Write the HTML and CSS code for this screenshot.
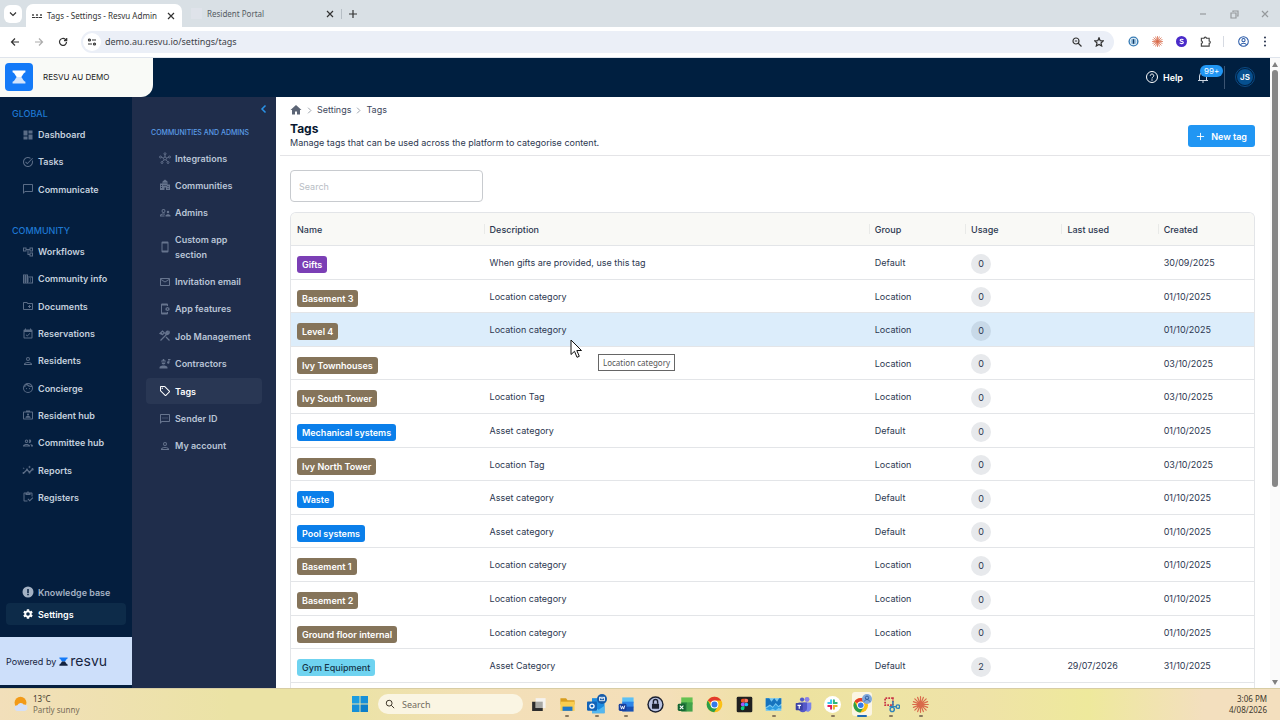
FILE: index.html
```html
<!DOCTYPE html>
<html lang="en">
<head>
    <meta charset="UTF-8">
    <meta name="viewport" content="width=device-width, initial-scale=1.0">
    <title>Tags - Settings - Resvu Admin</title>
    <link rel="stylesheet" href="styles.css">
</head>
<body>
    <!-- Icon set -->
    <svg class="sprite" aria-hidden="true">
        <symbol id="i-dashboard" viewBox="0 0 24 24"><path d="M3 13h8V3H3v10zm0 8h8v-6H3v6zm10 0h8V11h-8v10zm0-18v6h8V3h-8z"/></symbol>
        <symbol id="i-task" viewBox="0 0 24 24"><path d="M22 5.18 10.59 16.6l-4.24-4.24 1.41-1.41 2.83 2.83 10-10L22 5.18zM19.79 10.22c.13.57.21 1.17.21 1.78 0 4.42-3.58 8-8 8s-8-3.58-8-8 3.58-8 8-8c1.58 0 3.04.46 4.28 1.25l1.44-1.44A9.9 9.9 0 0 0 12 2C6.48 2 2 6.48 2 12s4.48 10 10 10 10-4.48 10-10c0-1.19-.22-2.33-.6-3.39l-1.61 1.61z"/></symbol>
        <symbol id="i-chat" viewBox="0 0 24 24"><path d="M20 2H4c-1.1 0-2 .9-2 2v18l4-4h14c1.1 0 2-.9 2-2V4c0-1.1-.9-2-2-2zm0 14H6l-2 2V4h16v12z"/></symbol>
        <symbol id="i-tree" viewBox="0 0 24 24"><path d="M22 11V3h-7v3H9V3H2v8h7V8h2v10h4v3h7v-8h-7v3h-2V8h2v3h7zM7 9H4V5h3v4zm10 6h3v4h-3v-4zm0-10h3v4h-3V5z"/></symbol>
        <symbol id="i-business" viewBox="0 0 24 24"><path d="M12 7V3H2v18h20V7H12zM6 19H4v-2h2v2zm0-4H4v-2h2v2zm0-4H4V9h2v2zm0-4H4V5h2v2zm4 12H8v-2h2v2zm0-4H8v-2h2v2zm0-4H8V9h2v2zm0-4H8V5h2v2zm10 12h-8v-2h2v-2h-2v-2h2v-2h-2V9h8v10zm-2-8h-2v2h2v-2zm0 4h-2v2h2v-2z"/></symbol>
        <symbol id="i-folder" viewBox="0 0 24 24"><path d="M20 6h-8l-2-2H4c-1.1 0-2 .9-2 2v12c0 1.1.9 2 2 2h16c1.1 0 2-.9 2-2V8c0-1.1-.9-2-2-2zm0 12H4V6h5.17l2 2H20v10zm-8-4h2v2h2v-2h2v-2h-2v-2h-2v2h-2v2z"/></symbol>
        <symbol id="i-event" viewBox="0 0 24 24"><path d="m16.53 11.06-1.06-1.06-4.88 4.88-2.12-2.12-1.06 1.06L10.59 17l5.94-5.94zM19 3h-1V1h-2v2H8V1H6v2H5c-1.1 0-2 .9-2 2v14c0 1.1.9 2 2 2h14c1.1 0 2-.9 2-2V5c0-1.1-.9-2-2-2zm0 16H5V8h14v11z"/></symbol>
        <symbol id="i-person" viewBox="0 0 24 24"><path d="M12 6a2 2 0 1 1 0 4 2 2 0 0 1 0-4m0 10c2.7 0 5.8 1.29 6 2H6c.23-.72 3.31-2 6-2m0-12a4 4 0 1 0 0 8 4 4 0 0 0 0-8zm0 10c-2.67 0-8 1.34-8 4v2h16v-2c0-2.66-5.33-4-8-4z"/></symbol>
        <symbol id="i-face" viewBox="0 0 24 24"><path d="M10.25 13a1.25 1.25 0 1 1-2.5 0 1.25 1.25 0 0 1 2.5 0zM15 11.75a1.25 1.25 0 1 0 0 2.5 1.25 1.25 0 0 0 0-2.5zM22 12a10 10 0 1 1-20 0 10 10 0 0 1 20 0zM10.66 4.12A10 10 0 0 0 17.5 8c.46 0 .91-.05 1.34-.12A8 8 0 0 0 12 4c-.46 0-.91.05-1.34.12zM4.42 9.47A8 8 0 0 0 8.08 5.03a8 8 0 0 0-3.66 4.44zM20 12c0-.78-.12-1.53-.33-2.24A10 10 0 0 1 17.5 10 12 12 0 0 1 9.26 5.77 9.9 9.9 0 0 1 4 10.86c.01.38 0 .76 0 1.14a8 8 0 0 0 16 0z"/></symbol>
        <symbol id="i-hub" viewBox="0 0 24 24"><path fill-rule="evenodd" d="M20 5h-4V3H8v2H4c-1.1 0-2 .9-2 2v12c0 1.1.9 2 2 2h16c1.1 0 2-.9 2-2V7c0-1.1-.9-2-2-2zm0 14H4V7h16v12zM12 9a2.2 2.2 0 1 0 0 4.4A2.2 2.2 0 0 0 12 9zm-5 8.5h10v-1c0-1.5-3-2.3-5-2.3s-5 .8-5 2.3v1z"/></symbol>
        <symbol id="i-people" viewBox="0 0 24 24"><path fill-rule="evenodd" d="M9 13.75c-2.34 0-7 1.17-7 3.5V19h14v-1.75c0-2.33-4.66-3.5-7-3.5zM4.34 17c.84-.58 2.87-1.25 4.66-1.25s3.82.67 4.66 1.25H4.34zM9 12a3.5 3.5 0 1 0 0-7 3.5 3.5 0 0 0 0 7zm0-5a1.5 1.5 0 1 1 0 3 1.5 1.5 0 0 1 0-3zm7.04 6.81c1.16.84 1.96 1.96 1.96 3.44V19h4v-1.75c0-2.02-3.5-3.17-5.96-3.44zM15 12a3.5 3.5 0 1 0-1.5-6.66 5.5 5.5 0 0 1 0 6.32c.45.22.96.34 1.5.34z"/></symbol>
        <symbol id="i-insights" viewBox="0 0 24 24"><path d="M21 8c-1.45 0-2.26 1.44-1.93 2.51l-3.55 3.56c-.3-.09-.74-.09-1.04 0l-2.55-2.55A2 2 0 0 0 10 9a2 2 0 0 0-1.93 2.52l-4.56 4.55C2.44 15.74 1 16.55 1 18a2 2 0 0 0 3.93.49l4.55-4.56c.3.09.74.09 1.04 0l2.55 2.55A2 2 0 0 0 15 19a2 2 0 0 0 1.93-2.52l3.56-3.55A2 2 0 0 0 23 10a2 2 0 0 0-2-2zM15 9l.94-2.07L18 6l-2.06-.93L15 3l-.92 2.07L12 6l2.08.93zM3.5 11 4 9l2-.5L4 8l-.5-2L3 8l-2 .5L3 9z"/></symbol>
        <symbol id="i-clipboard" viewBox="0 0 24 24"><path d="M5 5h2v3h10V5h2v6h2V5c0-1.1-.9-2-2-2h-4.18a3 3 0 0 0-5.64 0H5c-1.1 0-2 .9-2 2v14c0 1.1.9 2 2 2h6v-2H5V5zm7-2a1 1 0 1 1 0 2 1 1 0 0 1 0-2zm9 9.5L15.51 18 12.5 15 11 16.5l4.51 4.5L22.5 14z"/></symbol>
        <symbol id="i-info" viewBox="0 0 24 24"><path fill-rule="evenodd" d="M12 1a11 11 0 1 0 0 22 11 11 0 0 0 0-22zm-1.500 5h3v8h-3V6zm0 9.500h3v3h-3v-3z"/></symbol>
        <symbol id="i-gear" viewBox="0 0 24 24"><path d="M19.14 12.94c.04-.3.06-.61.06-.94s-.02-.64-.07-.94l2.03-1.58a.49.49 0 0 0 .12-.61l-1.92-3.32a.49.49 0 0 0-.59-.22l-2.39.96c-.5-.38-1.03-.7-1.62-.94l-.36-2.54a.48.48 0 0 0-.48-.41h-3.84c-.24 0-.43.17-.47.41l-.36 2.54c-.59.24-1.13.57-1.62.94l-2.39-.96a.49.49 0 0 0-.59.22L2.74 8.87c-.12.21-.08.47.12.61l2.03 1.58c-.05.3-.09.63-.09.94s.02.64.07.94l-2.03 1.58a.49.49 0 0 0-.12.61l1.92 3.32c.12.22.37.29.59.22l2.39-.96c.5.38 1.03.7 1.62.94l.36 2.54c.05.24.24.41.48.41h3.84c.24 0 .44-.17.47-.41l.36-2.54c.59-.24 1.13-.56 1.62-.94l2.39.96c.22.08.47 0 .59-.22l1.92-3.32a.49.49 0 0 0-.12-.61zM12 15.6a3.6 3.6 0 1 1 0-7.2 3.6 3.6 0 0 1 0 7.2z"/></symbol>
        <symbol id="i-integrations" viewBox="0 0 24 24"><g fill="none" stroke="currentColor" stroke-width="1.8"><circle cx="12" cy="13" r="3"/><circle cx="12" cy="3.5" r="2"/><circle cx="3" cy="10" r="2"/><circle cx="21" cy="10" r="2"/><circle cx="6" cy="21" r="2"/><circle cx="18" cy="21" r="2"/><path d="M12 5.500V10M5 10.700l4 1.500M19 10.700l-4 1.500M7 19l3-3.500M17 19l-3-3.500"/></g></symbol>
        <symbol id="i-city" viewBox="0 0 24 24"><path fill-rule="evenodd" d="M2 9h5V5l5-4 5 4v6h5v11h-8v-5h-3v5H2V9zm2 3v2h2v-2H4zm0 4v2h2v-2H4zm5-9v2h2V7H9zm4 0v2h2V7h-2zm-4 5v2h2v-2H9zm4 0v2h2v-2h-2zm4 2v2h2v-2h-2zm0 4v2h2v-2h-2z"/></symbol>
        <symbol id="i-admins" viewBox="0 0 24 24"><path d="M9 12a4 4 0 1 0 0-8 4 4 0 0 0 0 8zm0-6a2 2 0 1 1 0 4 2 2 0 0 1 0-4zm0 9c1 0 2 .1 3 .4v-2c-1-.3-2.1-.4-3-.4-2.7 0-7 1.3-7 4v2h9v-2H4c0-.7 2.7-2 5-2zM18 12.500a2.500 2.500 0 1 0 0-5 2.500 2.500 0 0 0 0 5zm-5 6.500h10v-1.500c0-2-3.300-3-5-3s-5 1-5 3V19z"/></symbol>
        <symbol id="i-phone" viewBox="0 0 24 24"><path fill-rule="evenodd" d="M17 1H7a2 2 0 0 0-2 2v18a2 2 0 0 0 2 2h10a2 2 0 0 0 2-2V3a2 2 0 0 0-2-2zm0 18H7V5h10v14z"/></symbol>
        <symbol id="i-mail" viewBox="0 0 24 24"><path d="M22 6c0-1.1-.9-2-2-2H4c-1.1 0-2 .9-2 2v12c0 1.1.9 2 2 2h16c1.1 0 2-.9 2-2V6zm-2 0-8 5-8-5h16zm0 12H4V8l8 5 8-5v10z"/></symbol>
        <symbol id="i-feature" viewBox="0 0 24 24"><path d="M16 1H6a2 2 0 0 0-2 2v18a2 2 0 0 0 2 2h10a2 2 0 0 0 2-2v-3h-2v1H6V5h10v1h2V3a2 2 0 0 0-2-2z"/><path fill-rule="evenodd" d="M17 7.500 18.300 9l2-.2.2 2 1.500 1.200-1.500 1.300-.2 2-2-.2L17 16.500l-1.300-1.400-2 .2-.2-2L12 12l1.500-1.200.2-2 2 .2zm0 3a1.500 1.500 0 1 0 0 3 1.500 1.500 0 0 0 0-3z"/></symbol>
        <symbol id="i-tools" viewBox="0 0 24 24"><g fill="none" stroke="currentColor" stroke-width="2.400"><path d="m14 14 7 7M3 21 14 10M3 5l5 5M2 7l5-5 4 4-4 3z"/><path d="M20.500 4.500 17 8l-2-2 3.500-3.500a4.500 4.500 0 0 0-5 6 4.500 4.500 0 0 0 7-4z"/></g></symbol>
        <symbol id="i-contractor" viewBox="0 0 24 24"><path d="M9 13a4 4 0 0 0 4-4H5a4 4 0 0 0 4 4zM4 7h10v1H4V7zm1-1c0-1.500.8-2.800 2-3.500V5h1V2h2v3h1V2.500c1.200.7 2 2 2 3.500H5zm4 9c-2.700 0-8 1.300-8 4v2h16v-2c0-2.700-5.300-4-8-4zM18 2h5v2h-2v5a2.500 2.500 0 1 1-2-2.400V4h-1z"/></symbol>
        <symbol id="i-tag" viewBox="0 0 24 24"><path d="m21.41 11.58-9-9A2 2 0 0 0 11 2H4c-1.1 0-2 .9-2 2v7c0 .55.22 1.05.59 1.42l9 9c.36.36.86.58 1.41.58s1.05-.22 1.41-.59l7-7a2 2 0 0 0 0-2.83zM13 20.01 4 11V4h7v-.01l9 9-7 7.02z"/><circle cx="6.5" cy="6.5" r="1.5"/></symbol>
        <symbol id="i-sms" viewBox="0 0 24 24"><path d="M20 2H4c-1.1 0-2 .9-2 2v18l4-4h14c1.1 0 2-.9 2-2V4c0-1.1-.9-2-2-2zm0 14H5.2L4 17.2V4h16v12zM7 9h2v2H7zm4 0h2v2h-2zm4 0h2v2h-2z"/></symbol>
        <symbol id="i-home" viewBox="0 0 24 24"><path d="M10 21v-6h4v6h6v-9h3L12 2 1 12h3v9z"/></symbol>
        <symbol id="i-search" viewBox="0 0 24 24"><g fill="none" stroke="currentColor" stroke-width="2.4"><circle cx="10" cy="10" r="7"/><path d="m15 15 7 7"/></g></symbol>
        <symbol id="i-chrome" viewBox="0 0 24 24"><circle cx="12" cy="12" r="11" fill="#fbc116"/><path fill="#e33b2e" d="M12 12 2.470 6.500A11 11 0 0 1 21.530 6.500H12z"/><path fill="#2a9e4b" d="M2.470 6.500A11 11 0 0 0 11.500 23l5.260-8.250L12 12 7.240 14.750z"/><circle cx="12" cy="12" r="5.5" fill="#fff"/><circle cx="12" cy="12" r="4.2" fill="#3479e8"/></symbol>
        <symbol id="i-burst" viewBox="0 0 24 24"><path stroke="#d9694a" stroke-width="1.7" stroke-linecap="round" d="M12 1v22M1 12h22M4 4l16 16M20 4 4 20M8 2l8 20M16 2 8 22M2 8l20 8M22 8 2 16"/></symbol>
        <symbol id="i-hourglass" viewBox="0 0 24 24"><path class="glass-top" d="M1 1h22v3c-4 1-4 5-7 8H8C5 9 5 5 1 4z"/><path class="glass-bottom" d="M8 12h8c3 3 3 7 7 8v3H1v-3c4-1 4-5 7-8z"/></symbol>
    </svg>

    <!-- Browser -->
    <div class="tab-strip">
        <button class="tab-menu" aria-label="Search tabs"><svg viewBox="0 0 10 10"><path d="m2 3.500 3 3 3-3"/></svg></button>
        <div class="tab tab-active">
            <span class="favicon"></span>
            <span class="tab-title">Tags - Settings - Resvu Admin</span>
            <button class="line-btn" aria-label="Close tab"><svg viewBox="0 0 10 10"><path d="m2 2 6 6M8 2 2 8"/></svg></button>
        </div>
        <div class="tab">
            <span class="favicon favicon-blank"></span>
            <span class="tab-title">Resident Portal</span>
            <button class="line-btn" aria-label="Close tab"><svg viewBox="0 0 10 10"><path d="m2 2 6 6M8 2 2 8"/></svg></button>
        </div>
        <button class="line-btn new-tab" aria-label="New tab"><svg viewBox="0 0 10 10"><path d="M5 1v8M1 5h8"/></svg></button>
        <div class="window-controls">
            <button class="line-btn" aria-label="Minimise"><svg viewBox="0 0 10 10"><path d="M2 5h6"/></svg></button>
            <button class="line-btn" aria-label="Restore"><svg viewBox="0 0 10 10"><path d="M2 4h5v5H2zM4 3V2h5v5H8"/></svg></button>
            <button class="line-btn" aria-label="Close"><svg viewBox="0 0 10 10"><path d="m2 2 6 6M8 2 2 8"/></svg></button>
        </div>
    </div>
    <div class="toolbar">
        <button class="line-btn" aria-label="Back"><svg viewBox="0 0 10 10"><path d="M9 5H1.500M5 1.500 1.500 5 5 8.500"/></svg></button>
        <button class="line-btn dim" aria-label="Forward"><svg viewBox="0 0 10 10"><path d="M1 5h7.500M5 1.500 8.500 5 5 8.500"/></svg></button>
        <button class="line-btn" aria-label="Reload"><svg viewBox="0 0 10 10"><path d="M8.500 5A3.500 3.500 0 1 1 7.300 2.300L8.500 3.500M8.700 1v2.700H6"/></svg></button>
        <div class="omnibox">
            <button class="line-btn site-info" aria-label="Site information"><svg viewBox="0 0 10 10"><circle cx="2.5" cy="3" r="1"/><path d="M5 3h4M1 7h4"/><circle cx="7.5" cy="7" r="1"/></svg></button>
            <input class="url" type="text" aria-label="Address" value="demo.au.resvu.io/settings/tags">
            <button class="line-btn" aria-label="Zoom"><svg viewBox="0 0 10 10"><circle cx="4" cy="4" r="3"/><path d="m6 6 3.500 3.500M2.800 4h2.400"/></svg></button>
            <button class="line-btn" aria-label="Bookmark"><svg viewBox="0 0 10 10"><path d="m5 .8 1.200 2.900 3.100.2L7 6l.7 3L5 7.400 2.300 9 3 6 .7 3.900l3.100-.2z"/></svg></button>
        </div>
        <div class="extensions">
            <svg viewBox="0 0 24 24"><circle cx="12" cy="12" r="11" fill="#357bb5"/><circle cx="12" cy="12" r="8" fill="#fff"/><circle cx="12" cy="12" r="6.5" fill="#95bfdf"/><path fill="#123b66" d="M10.500 7h3v10h-3z"/></svg>
            <svg><use href="#i-burst"/></svg>
            <svg viewBox="0 0 24 24"><circle cx="12" cy="12" r="12" fill="#4a2bc9"/><path fill="none" stroke="#fff" stroke-width="2.4" d="M16 8.500c-1-2-7-2.200-7 .8 0 3.500 7 1.500 7 5 0 3.200-6.500 3-8 .5"/></svg>
            <svg viewBox="0 0 24 24"><path fill="none" stroke="#444" stroke-width="2.5" d="M3 5h6a2.500 2.500 0 0 1 5 0h6v6a2.500 2.500 0 0 1 0 5v6H3v-6a2.500 2.500 0 0 0 0-5z"/></svg>
        </div>
        <svg class="profile" viewBox="0 0 24 24"><g fill="none" stroke="#2456a6" stroke-width="2.2"><circle cx="12" cy="12" r="10.5"/><circle cx="12" cy="9" r="3.5"/><path d="M5.500 19c3-4.500 10-4.500 13 0"/></g></svg>
        <svg class="kebab" viewBox="0 0 4 14"><circle cx="2" cy="2" r="1.3"/><circle cx="2" cy="7" r="1.3"/><circle cx="2" cy="12" r="1.3"/></svg>
    </div>

    <!-- Application -->
    <div class="viewport">
        <div class="app">
            <header class="app-header">
                <div class="brand">
                    <span class="brand-logo"><svg><use href="#i-hourglass"/></svg></span>
                    <span>RESVU AU DEMO</span>
                </div>
                <div class="account">
                    <a class="help" href="#"><svg viewBox="0 0 24 24"><g fill="none" stroke="#fff" stroke-width="2"><circle cx="12" cy="12" r="11"/><path d="M8.500 9.500c0-4.600 7-4.600 7 0 0 2.500-3.500 2.700-3.500 5.500"/></g><circle cx="12" cy="18" r="1.4" fill="#fff"/></svg>Help</a>
                    <button class="bell" aria-label="Notifications"><svg viewBox="0 0 24 24"><path fill="none" stroke="#cfd8e3" stroke-width="2" d="M2 19h20M5 19v-9a7 7 0 0 1 14 0v9M10 22h4"/></svg><span class="badge">99+</span></button>
                    <button class="avatar">JS</button>
                </div>
            </header>
            <div class="app-body">
                <nav class="sidebar" aria-label="Main">
                    <h2>GLOBAL</h2>
                    <ul class="menu menu-global">
                        <li><a href="#"><svg><use href="#i-dashboard"/></svg>Dashboard</a></li>
                        <li><a href="#"><svg><use href="#i-task"/></svg>Tasks</a></li>
                        <li><a href="#"><svg><use href="#i-chat"/></svg>Communicate</a></li>
                    </ul>
                    <h2>COMMUNITY</h2>
                    <ul class="menu menu-community">
                        <li><a href="#"><svg><use href="#i-tree"/></svg>Workflows</a></li>
                        <li><a href="#"><svg><use href="#i-business"/></svg>Community info</a></li>
                        <li><a href="#"><svg><use href="#i-folder"/></svg>Documents</a></li>
                        <li><a href="#"><svg><use href="#i-event"/></svg>Reservations</a></li>
                        <li><a href="#"><svg><use href="#i-person"/></svg>Residents</a></li>
                        <li><a href="#"><svg><use href="#i-face"/></svg>Concierge</a></li>
                        <li><a href="#"><svg><use href="#i-hub"/></svg>Resident hub</a></li>
                        <li><a href="#"><svg><use href="#i-people"/></svg>Committee hub</a></li>
                        <li><a href="#"><svg><use href="#i-insights"/></svg>Reports</a></li>
                        <li><a href="#"><svg><use href="#i-clipboard"/></svg>Registers</a></li>
                    </ul>
                    <ul class="menu menu-bottom">
                        <li><a class="muted" href="#"><svg><use href="#i-info"/></svg>Knowledge base</a></li>
                        <li><a class="active" href="#"><svg><use href="#i-gear"/></svg>Settings</a></li>
                    </ul>
                    <div class="powered">Powered by <svg><use href="#i-hourglass"/></svg><span class="wordmark">resvu</span></div>
                </nav>
                <nav class="subnav" aria-label="Settings">
                    <button class="collapse" aria-label="Collapse menu"><svg viewBox="0 0 10 10"><path d="M6.500 1.500 3 5l3.500 3.500"/></svg></button>
                    <h2>COMMUNITIES AND ADMINS</h2>
                    <ul class="submenu">
                        <li><a href="#"><svg><use href="#i-integrations"/></svg>Integrations</a></li>
                        <li><a href="#"><svg><use href="#i-city"/></svg>Communities</a></li>
                        <li><a href="#"><svg><use href="#i-admins"/></svg>Admins</a></li>
                        <li><a href="#"><svg><use href="#i-phone"/></svg>Custom app<br>section</a></li>
                        <li><a href="#"><svg><use href="#i-mail"/></svg>Invitation email</a></li>
                        <li><a href="#"><svg><use href="#i-feature"/></svg>App features</a></li>
                        <li><a href="#"><svg><use href="#i-tools"/></svg>Job Management</a></li>
                        <li><a href="#"><svg><use href="#i-contractor"/></svg>Contractors</a></li>
                        <li><a class="active" href="#"><svg><use href="#i-tag"/></svg>Tags</a></li>
                        <li><a href="#"><svg><use href="#i-sms"/></svg>Sender ID</a></li>
                        <li><a href="#"><svg><use href="#i-person"/></svg>My account</a></li>
                    </ul>
                </nav>
                <main>
                    <div class="page-head">
                        <div>
                            <div class="breadcrumb">
                                <a href="#" aria-label="Home"><svg class="home"><use href="#i-home"/></svg></a>
                                <svg class="sep" viewBox="0 0 10 10"><path d="m3 1 4 4-4 4"/></svg>
                                <a href="#">Settings</a>
                                <svg class="sep" viewBox="0 0 10 10"><path d="m3 1 4 4-4 4"/></svg>
                                <a href="#">Tags</a>
                            </div>
                            <h1>Tags</h1>
                            <p>Manage tags that can be used across the platform to categorise content.</p>
                        </div>
                        <button class="new-tag"><svg viewBox="0 0 10 10"><path d="M5 1v8M1 5h8"/></svg>New tag</button>
                    </div>
                    <input class="search" type="text" placeholder="Search" aria-label="Search tags">
                    <div class="table-wrap">
                        <table>
                            <thead>
                                <tr><th class="col-name">Name</th><th class="col-desc">Description</th><th>Group</th><th>Usage</th><th>Last used</th><th>Created</th></tr>
                            </thead>
                            <tbody>
                                <tr><td><span class="tag purple">Gifts</span></td><td>When gifts are provided, use this tag</td><td>Default</td><td><span class="count">0</span></td><td></td><td>30/09/2025</td></tr>
                                <tr><td><span class="tag brown">Basement 3</span></td><td>Location category</td><td>Location</td><td><span class="count">0</span></td><td></td><td>01/10/2025</td></tr>
                                <tr class="hovered"><td><span class="tag brown">Level 4</span></td><td>Location category</td><td>Location</td><td><span class="count">0</span></td><td></td><td>01/10/2025</td></tr>
                                <tr><td><span class="tag brown">Ivy Townhouses</span></td><td></td><td>Location</td><td><span class="count">0</span></td><td></td><td>03/10/2025</td></tr>
                                <tr><td><span class="tag brown">Ivy South Tower</span></td><td>Location Tag</td><td>Location</td><td><span class="count">0</span></td><td></td><td>03/10/2025</td></tr>
                                <tr><td><span class="tag blue">Mechanical systems</span></td><td>Asset category</td><td>Default</td><td><span class="count">0</span></td><td></td><td>01/10/2025</td></tr>
                                <tr><td><span class="tag brown">Ivy North Tower</span></td><td>Location Tag</td><td>Location</td><td><span class="count">0</span></td><td></td><td>03/10/2025</td></tr>
                                <tr><td><span class="tag blue">Waste</span></td><td>Asset category</td><td>Default</td><td><span class="count">0</span></td><td></td><td>01/10/2025</td></tr>
                                <tr><td><span class="tag blue">Pool systems</span></td><td>Asset category</td><td>Default</td><td><span class="count">0</span></td><td></td><td>01/10/2025</td></tr>
                                <tr><td><span class="tag brown">Basement 1</span></td><td>Location category</td><td>Location</td><td><span class="count">0</span></td><td></td><td>01/10/2025</td></tr>
                                <tr><td><span class="tag brown">Basement 2</span></td><td>Location category</td><td>Location</td><td><span class="count">0</span></td><td></td><td>01/10/2025</td></tr>
                                <tr><td><span class="tag brown">Ground floor internal</span></td><td>Location category</td><td>Location</td><td><span class="count">0</span></td><td></td><td>01/10/2025</td></tr>
                                <tr><td><span class="tag cyan">Gym Equipment</span></td><td>Asset Category</td><td>Default</td><td><span class="count">2</span></td><td>29/07/2026</td><td>31/10/2025</td></tr>
                                <tr><td></td><td></td><td></td><td></td><td></td><td></td></tr>
                            </tbody>
                        </table>
                    </div>
                </main>
            </div>
        </div>
        <div class="scrollbar"><span class="arrow-up"></span><span class="thumb"></span><span class="arrow-down"></span></div>
    </div>

    <div class="tooltip" role="tooltip">Location category</div>
    <svg class="cursor" viewBox="0 0 12 20"><path d="M1 1v14.500l3.500-3.200 2.500 6 2.300-1-2.500-5.800h4.700z"/></svg>

    <!-- Taskbar -->
    <footer class="taskbar">
        <div class="weather">
            <svg viewBox="0 0 24 24"><circle cx="12" cy="10" r="9.5" fill="#f29a18"/><path fill="#d5e0f7" d="M7 23a4.500 4.500 0 0 1 0-9 6 6 0 0 1 10.500-1A5 5 0 0 1 18.500 23z"/></svg>
            <div><span>13°C</span><br><span class="sub">Partly sunny</span></div>
        </div>
        <div class="dock">
            <svg class="start" viewBox="0 0 16 16"><path fill="#1c9de0" d="M0 0h7.500v7.500H0z"/><path fill="#1690d8" d="M8.500 0H16v7.500H8.500zM0 8.500h7.500V16H0z"/><path fill="#0c7fca" d="M8.500 8.500H16V16H8.500z"/></svg>
            <label class="task-search"><svg><use href="#i-search"/></svg><input type="text" placeholder="Search"></label>
            <div class="apps">
                <span><svg viewBox="0 0 24 24"><path fill="#f5f3ef" d="M8 3h14v14H8z"/><path fill="#2c2c2c" d="M3 8h5v9h10v4H3z"/><path fill="#a8a8a4" d="M8 8h10v9H8z"/></svg></span>
                <span class="open"><svg viewBox="0 0 24 24"><path fill="#d89d1e" d="M2 3h8l2 3h10v6H2z"/><path fill="#f9cd50" d="M2 8h20v13H2z"/><path fill="#1f78c8" d="M5 15h14v6H5z"/></svg></span>
                <span class="open"><svg class="big" viewBox="0 0 24 24"><path fill="#1c8be0" d="M6 5h15v18H6z"/><path fill="#53b7ef" d="m6 14 8 5 7-5v9H6z"/><rect y="9" width="12" height="11" rx="1" fill="#1263b8"/><circle cx="6" cy="14.5" r="2.5" fill="none" stroke="#fff" stroke-width="1.5"/><circle cx="18" cy="6" r="6" fill="#165ba8"/><path fill="none" stroke="#fff" d="M15 4h6v4h-6zl3 2 3-2"/></svg></span>
                <span class="open"><svg viewBox="0 0 24 24"><path fill="#5cc0f5" d="M6 2h16v8H6z"/><path fill="#2d84e8" d="M6 8h16v8H6z"/><path fill="#1851b4" d="M6 15h16v7H6z"/><rect x="1" y="11" width="11" height="10" rx="2" fill="#173f9c"/><path fill="none" stroke="#fff" stroke-width="1.3" d="m3.500 13.500 1.500 5 1.500-4 1.500 4 1.500-5"/></svg></span>
                <span><svg viewBox="0 0 24 24"><circle cx="12" cy="12" r="11.5" fill="#1c2030"/><circle cx="12" cy="12" r="9.5" fill="#b9c2e2"/><path fill="#1c2030" d="M7 11h10v7H7z"/><path fill="none" stroke="#1c2030" stroke-width="2" d="M9 11V8a3 3 0 0 1 6 0v3"/></svg></span>
                <span><svg viewBox="0 0 24 24"><path fill="#64c252" d="M6 2h16v10H6z"/><path fill="#25833d" d="M6 9h8v13H6z"/><path fill="#41a34b" d="M14 9h8v13h-8z"/><rect x="1" y="11" width="11" height="10" rx="2" fill="#146632"/><path stroke="#fff" stroke-width="1.5" d="m4 13.500 5 5M9 13.500l-5 5"/></svg></span>
                <span><svg><use href="#i-chrome"/></svg></span>
                <span><svg viewBox="0 0 24 24"><rect x="1" y="1" width="22" height="22" rx="2" fill="#202020"/><path fill="#f24e1e" d="M12 4H9.500a2.600 2.600 0 0 0 0 5.300H12z"/><path fill="#ff7262" d="M12 4h2.500a2.600 2.600 0 0 1 0 5.300H12z"/><path fill="#a259ff" d="M12 9.300H9.500a2.600 2.600 0 0 0 0 5.300H12z"/><circle cx="14.6" cy="12" r="2.6" fill="#1abcfe"/><path fill="#0acf83" d="M12 14.600H9.500a2.700 2.700 0 1 0 2.500 2.700z"/></svg></span>
                <span class="open"><svg viewBox="0 0 24 24"><path fill="#78c8f0" d="M1 3h22v18H1z"/><path fill="#1673be" d="M1 3h5l3 5 4-5 4 5 3-5h3v8l-4 3-4-4-4 5-4-3-6 4z"/><path fill="#2d9be0" d="m1 18 6-4 4 3 4-5 4 4 4-3v5l-4-1-4 3-4-2-4 2z"/></svg></span>
                <span><svg viewBox="0 0 24 24"><circle cx="17" cy="5" r="3.5" fill="#8a80e8"/><circle cx="10" cy="5" r="3" fill="#5059c9"/><path fill="#7b83eb" d="M11 9h12v8a5 5 0 0 1-9 3z"/><path fill="#5558c8" d="M5 9h12v8a6 6 0 0 1-12 0z"/><rect x="1" y="10" width="10" height="10" rx="1" fill="#3c43a5"/><path fill="#fff" d="M3.500 12.500h5V14H6.800v4H5.200v-4H3.500z"/></svg></span>
                <span class="open"><svg viewBox="0 0 24 24"><circle cx="12" cy="12" r="12" fill="#fff"/><g fill="none" stroke-width="2.8" stroke-linecap="round"><path stroke="#36c5f0" d="M10 6v4H6"/><path stroke="#2eb67d" d="M14 6v4h4"/><path stroke="#ecb22e" d="M14 18v-4h4"/><path stroke="#e01e5a" d="M10 18v-4H6"/></g></svg></span>
                <span class="current"><svg class="big" viewBox="0 0 24 24"><use href="#i-chrome" x="1" y="4" width="19" height="19"/><circle cx="18" cy="6" r="6" fill="#82a9dc"/><circle cx="18" cy="4.5" r="2" fill="none" stroke="#245298"/><path fill="none" stroke="#245298" d="M14.500 9c1.500-3 5.500-3 7 0"/></svg></span>
                <span class="open"><svg viewBox="0 0 24 24"><path fill="none" stroke="#c83444" stroke-width="2.5" stroke-dasharray="2.5 1.5" d="M14 3H3v10h11z"/><g fill="none" stroke="#2f83b8" stroke-width="2"><path d="M14 7v9M9 15h10"/><circle cx="13" cy="19" r="3"/><circle cx="21" cy="15" r="2.5"/></g></svg></span>
                <span class="open"><svg><use href="#i-burst"/></svg></span>
            </div>
        </div>
        <div class="clock">3:06 PM<br>4/08/2026</div>
    </footer>
</body>
</html>
```
FILE: styles.css
```css
* {
    box-sizing: border-box;
}

body {
    margin: 0;
    height: 100vh;
    display: flex;
    flex-direction: column;
    overflow: hidden;
    font-family: Inter, "Liberation Sans", sans-serif;
    font-size: 9px;
    color: #2c3750;
    background-color: #fff;
}

h1, h2, p, ul {
    margin: 0;
    padding: 0;
}

ul {
    list-style: none;
}

a {
    color: inherit;
    text-decoration: none;
}

button, input {
    font: inherit;
    color: inherit;
    border: none;
    background: none;
    padding: 0;
    margin: 0;
}

svg {
    flex: none;
    fill: currentColor;
}

.sprite {
    position: absolute;
    width: 0;
    height: 0;
}

.glass-top {
    fill: var(--glass-top, currentColor);
}

.glass-bottom {
    fill: var(--glass-bottom, currentColor);
}

/* Browser */
.tab-strip, .toolbar, .tooltip, .taskbar {
    font-family: "Noto Sans", sans-serif;
}

.tab-strip {
    flex: none;
    display: flex;
    align-items: center;
    height: 27px;
    background-color: #d9e0e5;
    font-size: 8px;
}

.tab-menu {
    width: 18px;
    height: 18px;
    margin: 0 4px;
    border-radius: 6px;
    background-color: #fff;
    display: flex;
    align-items: center;
    justify-content: center;
}

.tab-menu svg, .line-btn svg {
    width: 10px;
    height: 10px;
    fill: none;
    stroke: #333;
    stroke-width: 1.2;
}

.line-btn {
    display: flex;
}

.tab {
    display: flex;
    align-items: center;
    gap: 5px;
    width: 158px;
    height: 23px;
    padding: 0 5px 0 6px;
    color: #555c63;
}

.tab-active {
    align-self: flex-end;
    width: 156px;
    padding-right: 6px;
    border-radius: 7px 7px 0 0;
    background-color: #fff;
    color: #333;
}

.tab-title {
    flex: 1;
    white-space: nowrap;
}

.favicon {
    width: 10px;
    height: 4px;
    border-bottom: 1px dashed #333;
    border-top: 2px dotted #777;
}

.favicon-blank {
    width: 11px;
    height: 11px;
    margin-left: 3px;
    border: none;
    background-color: #dfe3ea;
}

.new-tab {
    margin-left: 1px;
    padding-left: 6px;
    border-left: 1px solid #b6bec5;
}

.window-controls {
    margin-left: auto;
    display: flex;
    gap: 21px;
    padding-right: 10px;
    opacity: 0.4;
}

.toolbar {
    flex: none;
    display: flex;
    align-items: center;
    gap: 14px;
    height: 31px;
    padding: 0 13px 1px 10px;
    border-bottom: 1px solid #dfe4ec;
}

.dim {
    opacity: 0.4;
}

.omnibox {
    flex: 1;
    display: flex;
    align-items: center;
    gap: 12px;
    height: 22px;
    margin-left: -1px;
    padding: 0 10px 0 2px;
    border-radius: 11px;
    background-color: #ebeff7;
}

.site-info {
    width: 18px;
    height: 18px;
    border-radius: 50%;
    background-color: #fff;
    align-items: center;
    justify-content: center;
}

.url {
    flex: 1;
    margin-left: -8px;
    color: #3c4248;
}

.extensions {
    display: flex;
    gap: 13px;
    padding-right: 12px;
    border-right: 1px solid #d6dae2;
}

.extensions svg, .profile {
    width: 11px;
    height: 11px;
}

.kebab {
    width: 4px;
    height: 11px;
}

/* Application */
.viewport {
    flex: 1;
    min-height: 0;
    display: flex;
}

.app {
    flex: 1;
    min-width: 0;
    display: flex;
    flex-direction: column;
}

.app-header {
    flex: none;
    display: flex;
    justify-content: space-between;
    height: 39px;
    background-color: #001f40;
}

.brand {
    display: flex;
    align-items: center;
    gap: 10px;
    width: 153px;
    padding: 0 0 1px 5px;
    border-radius: 0 0 12px 0;
    background-color: #f9faf7;
    color: #222;
    font-size: 8px;
}

.brand-logo {
    display: flex;
    align-items: center;
    justify-content: center;
    width: 28px;
    height: 28px;
    border-radius: 4px;
    background-color: #147af8;
    --glass-top: #fff;
    --glass-bottom: #d3e4fc;
}

.brand-logo svg {
    width: 14px;
    height: 14px;
}

.account {
    display: flex;
    align-items: center;
    padding: 0 15px 1px 0;
    color: #fff;
}

.help {
    display: flex;
    align-items: center;
    gap: 5px;
    font-size: 9px;
    font-weight: 600;
}

.help svg {
    width: 12px;
    height: 12px;
}

.bell {
    position: relative;
    display: flex;
    margin-left: 14px;
    padding-right: 15px;
    border-right: 1px solid #3b5472;
    height: 23px;
    align-items: center;
}

.bell svg {
    width: 12px;
    height: 12px;
}

.badge {
    position: absolute;
    left: 3px;
    top: -1px;
    padding: 0 4px;
    border-radius: 6px;
    background-color: #2196f3;
    font-size: 8px;
    line-height: 12px;
}

.avatar {
    width: 20px;
    height: 20px;
    margin-left: 10px;
    border: 2px solid #001f40;
    outline: 1px solid #0c4a83;
    outline-offset: -1px;
    border-radius: 50%;
    background-color: #06508f;
    font-size: 8px;
    font-weight: 600;
}

.app-body {
    flex: 1;
    min-height: 0;
    display: flex;
}

/* Main menu */
.sidebar {
    flex: none;
    display: flex;
    flex-direction: column;
    width: 132px;
    padding: 10px 0 3px;
    background-color: #041e3e;
    color: #c3cfdd;
}

.sidebar h2 {
    padding-left: 12px;
    font-size: 9px;
    line-height: 14px;
    font-weight: 500;
    color: #1e78d2;
}

.menu {
    display: grid;
    grid-auto-rows: 1fr;
}

.menu a, .submenu a {
    display: flex;
    align-items: center;
    gap: 4px;
    height: 100%;
    font-weight: 600;
}

.menu a {
    padding-left: 22px;
}

.menu svg, .submenu svg {
    width: 12px;
    height: 12px;
    color: #5a6c86;
}

.menu-global {
    height: 82px;
    margin-bottom: 21px;
}

.menu-community {
    height: 273px;
}

.menu-bottom {
    margin: auto 6px 12px;
    grid-auto-rows: 22px;
}

.menu-bottom a {
    padding-left: 16px;
    border-radius: 4px;
}

.menu a.muted, .menu .muted svg {
    color: #a4b2c4;
}

.menu a.active, .submenu a.active, .menu .active svg, .submenu .active svg {
    color: #fff;
}

.menu .active {
    background-color: #0d2b49;
}

.powered {
    display: flex;
    align-items: center;
    height: 48px;
    padding-left: 6px;
    background-color: #cddffa;
    color: #17253f;
    --glass-top: #147af8;
    --glass-bottom: #14233f;
}

.powered svg {
    width: 9px;
    height: 9px;
    margin: 0 2px 0 3px;
}

.wordmark {
    font-size: 14px;
    line-height: 16px;
}

/* Settings menu */
.subnav {
    flex: none;
    display: flex;
    flex-direction: column;
    width: 144px;
    padding: 7px 14px 0;
    background-color: #1f2d4b;
    color: #b9c4d6;
}

.collapse {
    align-self: flex-end;
    display: flex;
    margin-right: -7px;
}

.collapse svg {
    width: 10px;
    height: 10px;
    fill: none;
    stroke: #2a93e8;
    stroke-width: 1.5;
}

.subnav h2 {
    margin: 12px 0 5px;
    padding-left: 5px;
    font-size: 7px;
    line-height: 14px;
    font-weight: 500;
    white-space: nowrap;
    color: #5b9de8;
}

.submenu {
    display: flex;
    flex-direction: column;
    justify-content: space-between;
    height: 314px;
}

.submenu a {
    min-height: 26px;
    padding: 5px 0 5px 13px;
    border-radius: 4px;
    line-height: 15px;
}

.submenu .active {
    background-color: #293754;
}

.submenu svg {
    color: #66748e;
}

/* Page */
main {
    flex: 1;
    min-width: 0;
    display: flex;
    flex-direction: column;
    overflow: hidden;
    background-color: #fff;
}

.page-head {
    flex: none;
    display: flex;
    justify-content: space-between;
    align-items: flex-end;
    height: 59px;
    margin-left: 4px;
    padding: 0 15px 6px 10px;
    border-bottom: 1px solid #e4e4e7;
}

.breadcrumb {
    display: flex;
    align-items: center;
    gap: 4px;
    line-height: 14px;
    color: #3d475c;
}

.breadcrumb a {
    display: flex;
}

.home {
    width: 12px;
    height: 12px;
    color: #5c6575;
}

.sep {
    width: 7px;
    height: 7px;
    fill: none;
    stroke: #777f8c;
}

h1 {
    margin-top: 4px;
    font-size: 12px;
    line-height: 16px;
    color: #08172f;
}

.page-head p {
    line-height: 12px;
}

.new-tag {
    display: flex;
    align-items: center;
    gap: 6px;
    height: 22px;
    margin-bottom: 2px;
    padding: 0 8px;
    border-radius: 3px;
    background-color: #2196f3;
    color: #fff;
    font-weight: 600;
}

.new-tag svg {
    width: 9px;
    height: 9px;
    stroke: #fff;
}

.search {
    flex: none;
    width: 193px;
    height: 32px;
    margin: 14px 0 10px 14px;
    padding: 0 8px;
    border: 1px solid #c8cbcf;
    border-radius: 4px;
}

.search::placeholder {
    color: #b8bdc4;
}

.table-wrap {
    flex: 1;
    min-height: 0;
    margin: 0 15px 0 14px;
    overflow: hidden;
    border: 1px solid #e3e5e8;
    border-bottom: none;
    border-radius: 6px 6px 0 0;
}

table {
    width: 100%;
    table-layout: fixed;
    border-collapse: separate;
    border-spacing: 0;
}

th, td {
    padding: 0 0 0 6px;
    border-bottom: 1px solid #e3e5e8;
    text-align: left;
    white-space: nowrap;
}

th {
    height: 33px;
    background: linear-gradient(#e9eae8, #e9eae8) left center / 1px 10px no-repeat #f9f9f6;
    font-weight: 500;
}

th:first-child {
    background: #f9f9f6;
}

.col-name {
    width: 20%;
}

.col-desc {
    width: 40%;
}

td {
    height: 34px;
}

tr:nth-child(5n+2) td, tr:nth-child(5n+4) td {
    height: 33px;
}

.hovered td {
    background-color: #dcedfb;
}

td:first-child {
    padding-top: 4px;
}

.tag {
    display: inline-block;
    padding: 0 5px;
    border-radius: 3px;
    color: #fff;
    font-weight: 600;
    line-height: 17px;
    vertical-align: middle;
}

.purple {
    background-color: #7b3fb5;
}

.brown {
    background-color: #85745a;
}

.blue {
    background-color: #0b7fea;
}

.cyan {
    background-color: #6fd3f0;
    color: #143246;
    font-weight: 500;
}

.count {
    display: block;
    width: 20px;
    margin-top: 2px;
    border-radius: 50%;
    background-color: #e7e9ec;
    line-height: 20px;
    text-align: center;
}

.hovered .count {
    background-color: #c8d9e8;
}

.scrollbar {
    flex: none;
    display: flex;
    flex-direction: column;
    align-items: center;
    width: 10px;
    padding: 4px 0 3px;
    background-color: #fafafa;
}

.arrow-up, .arrow-down {
    border: 3px solid transparent;
}

.arrow-up {
    border-bottom: 5px solid #808080;
    border-top: none;
}

.arrow-down {
    margin-top: auto;
    border-top: 5px solid #808080;
    border-bottom: none;
}

.thumb {
    width: 6px;
    height: 67%;
    margin-top: 3px;
    border-radius: 3px;
    background-color: #868686;
}

.tooltip {
    position: absolute;
    left: 598px;
    top: 354px;
    padding: 0 4px;
    border: 1px solid #666;
    background-color: #fff;
    color: #555;
    font-size: 8px;
    line-height: 15px;
}

.cursor {
    position: absolute;
    left: 570px;
    top: 339px;
    width: 12px;
    height: 20px;
    fill: #fff;
    stroke: #111;
}

/* Taskbar */
.taskbar {
    flex: none;
    display: grid;
    grid-template-columns: 1fr auto 1fr;
    align-items: center;
    height: 32px;
    padding-bottom: 1px;
    border-top: 1px solid #d8cda4;
    background: linear-gradient(to right, #f2dfba, #ebe3a5 18%, #ebe3a5 27%, #f3dfb8 38%, #f4dfb9 52%, #ede29f 62%, #eee4a5 70%, #efe2a8 76%, #eee99c 85%, #f3dfbe 94%, #f3dfbe);
    color: #40382c;
    font-size: 8px;
    line-height: 11px;
}

.weather {
    display: flex;
    align-items: center;
    gap: 5px;
    padding-left: 13px;
}

.weather svg {
    width: 15px;
    height: 16px;
}

.sub {
    color: #776d58;
}

.dock {
    display: flex;
    align-items: center;
    padding-left: 3px;
}

.start {
    width: 16px;
    height: 16px;
    margin-right: 10px;
}

.task-search {
    display: flex;
    align-items: center;
    gap: 7px;
    width: 145px;
    height: 20px;
    margin-right: 5px;
    padding-left: 7px;
    border-radius: 10px;
    background-color: #faf5e3;
}

.task-search svg {
    width: 10px;
    height: 10px;
}

.task-search input {
    flex: 1;
    min-width: 0;
    font-size: 9px;
}

.task-search input::placeholder {
    color: #716b60;
}

.apps {
    display: flex;
    justify-content: space-between;
    width: 403px;
}

.apps span {
    position: relative;
    display: flex;
    align-items: center;
    justify-content: center;
    width: 20px;
    height: 24px;
}

.apps svg {
    width: 17px;
    height: 17px;
}

.apps .big {
    width: 20px;
    height: 20px;
}

.open::after, .current::after {
    content: "";
    position: absolute;
    bottom: -1px;
    width: 4px;
    height: 2px;
    border-radius: 1px;
    background-color: #89795f;
}

.current {
    border-radius: 3px;
    background-color: #fbf5e4;
}

.current::after {
    width: 10px;
    background-color: #1d69b4;
}

.clock {
    padding-right: 13px;
    text-align: right;
}
```
